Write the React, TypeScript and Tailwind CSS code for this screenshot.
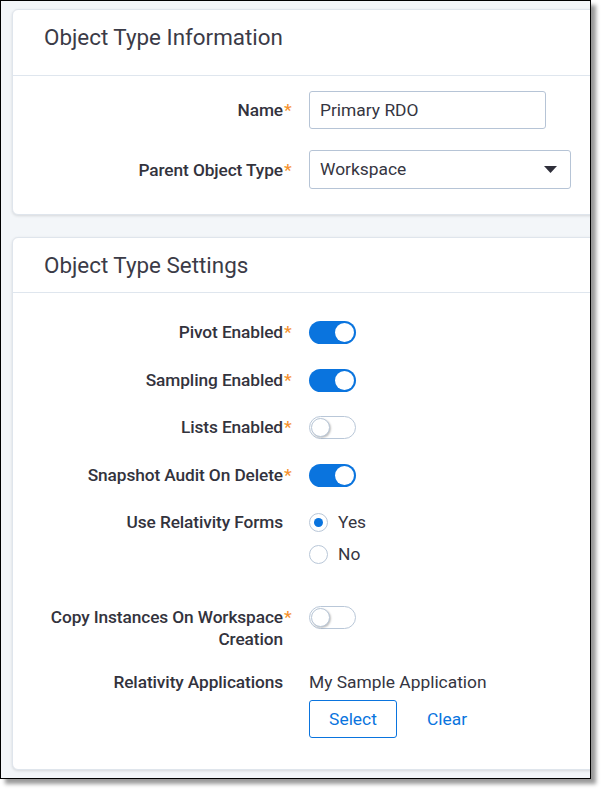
const FONT = { fontFamily: "Roboto, 'Noto Sans', Arial, sans-serif" };

function Req() {
  return <span className="text-[#f5922f] ml-[1px] w-[9px] inline-block text-left">*</span>;
}

function Label({ children, req, className = "" }: { children: React.ReactNode; req?: boolean; className?: string }) {
  return (
    <div className={`w-[281px] shrink-0 flex justify-end items-start text-right pr-[1px] text-[17.3px] font-medium text-[#33333d] leading-[22px] tracking-[-0.1px] ${className}`}>
      <span>{children}</span>
      {req ? <Req /> : <span className="w-[10px] inline-block" />}
    </div>
  );
}

function Toggle({ on }: { on: boolean }) {
  return on ? (
    <div className="w-[47px] h-[23px] rounded-full bg-[#0a74de] flex items-center justify-end pr-[2px]">
      <div className="w-[19px] h-[19px] rounded-full bg-white" />
    </div>
  ) : (
    <div className="w-[47px] h-[23px] rounded-full bg-white border border-[#b9c7d8] flex items-center pl-[1px]">
      <div className="w-[19px] h-[19px] rounded-full bg-white border border-[#b9c7d8] shadow-[1px_1px_2px_rgba(0,0,0,0.25)]" />
    </div>
  );
}

function Radio({ checked, label }: { checked?: boolean; label: string }) {
  return (
    <div className="flex items-center gap-[10px] h-[22px]">
      <div className="w-[19px] h-[19px] rounded-full border border-[#b9c7d8] bg-white flex items-center justify-center">
        {checked && <div className="w-[9px] h-[9px] rounded-full bg-[#0a74de]" />}
      </div>
      <span className="text-[17.4px] text-[#353541]">{label}</span>
    </div>
  );
}

function Card({ title, headerH, children }: { title: string; headerH: string; children: React.ReactNode }) {
  return (
    <div className="w-[610px] bg-white border border-[#dfe5ec] rounded-[6px] shadow-[0_1px_3px_rgba(0,0,0,0.12)]">
      <div className={`${headerH} pt-[13px] pl-[31px] border-b border-[#dfe6ee]`}>
        <h2 className="text-[22.4px] leading-[28px] text-[#3b3b47] font-normal">{title}</h2>
      </div>
      {children}
    </div>
  );
}

export default function App() {
  return (
    <div className="w-[606px] h-[794px] bg-white" style={FONT}>
      <div className="w-[591px] h-[779px] border border-black bg-[#f3f6f9] overflow-hidden shadow-[5px_5px_4px_rgba(0,0,0,0.4)] pl-[11px] pt-[8px] flex flex-col gap-[22px]">
        <Card title="Object Type Information" headerH="h-[66px]">
          <div className="pt-[15px] pb-[25px] flex flex-col gap-[21px]">
            <div className="flex items-center gap-[15px]">
              <Label req>Name</Label>
              <div className="w-[237px] h-[38px] border border-[#b6c4d6] rounded-[3px] flex items-center pl-[10px] text-[17.4px] text-[#353541]">
                Primary RDO
              </div>
            </div>
            <div className="flex items-center gap-[15px]">
              <Label req>Parent Object Type</Label>
              <div className="w-[262px] h-[39px] border border-[#b6c4d6] rounded-[3px] flex items-center justify-between pl-[10px] pr-[13px] text-[17.4px] text-[#353541]">
                <span>Workspace</span>
                <svg width="13" height="7" viewBox="0 0 13 7"><path d="M0 0h13L6.5 7z" fill="#2f2f3a" /></svg>
              </div>
            </div>
          </div>
        </Card>

        <Card title="Object Type Settings" headerH="h-[55px]">
          <div className="pt-[27px] pb-[31px] flex flex-col">
            <div className="flex items-center gap-[15px] h-[24px]">
              <Label req>Pivot Enabled</Label>
              <Toggle on />
            </div>
            <div className="flex items-center gap-[15px] h-[24px] mt-[24px]">
              <Label req>Sampling Enabled</Label>
              <Toggle on />
            </div>
            <div className="flex items-center gap-[15px] h-[24px] mt-[23px]">
              <Label req>Lists Enabled</Label>
              <Toggle on={false} />
            </div>
            <div className="flex items-center gap-[15px] h-[24px] mt-[24px]">
              <Label req>Snapshot Audit On Delete</Label>
              <Toggle on />
            </div>
            <div className="flex items-start gap-[15px] mt-[24px]">
              <Label>Use Relativity Forms</Label>
              <div className="flex flex-col gap-[10px]">
                <Radio checked label="Yes" />
                <Radio label="No" />
              </div>
            </div>
            <div className="flex items-start gap-[15px] mt-[41px]">
              <Label req>
                Copy Instances On Workspace
                <br />
                Creation
              </Label>
              <Toggle on={false} />
            </div>
            <div className="flex items-start gap-[15px] mt-[21px]">
              <Label>Relativity Applications</Label>
              <div className="flex flex-col">
                <span className="text-[17.4px] text-[#353541] leading-[22px]">My Sample Application</span>
                <div className="flex items-center gap-[30px] mt-[7px]">
                  <button className="w-[88px] h-[38px] border border-[#0a74de] rounded-[3px] text-[17.4px] text-[#0a74de] bg-white">
                    Select
                  </button>
                  <span className="text-[17.4px] text-[#0a74de]">Clear</span>
                </div>
              </div>
            </div>
          </div>
        </Card>
      </div>
    </div>
  );
}
